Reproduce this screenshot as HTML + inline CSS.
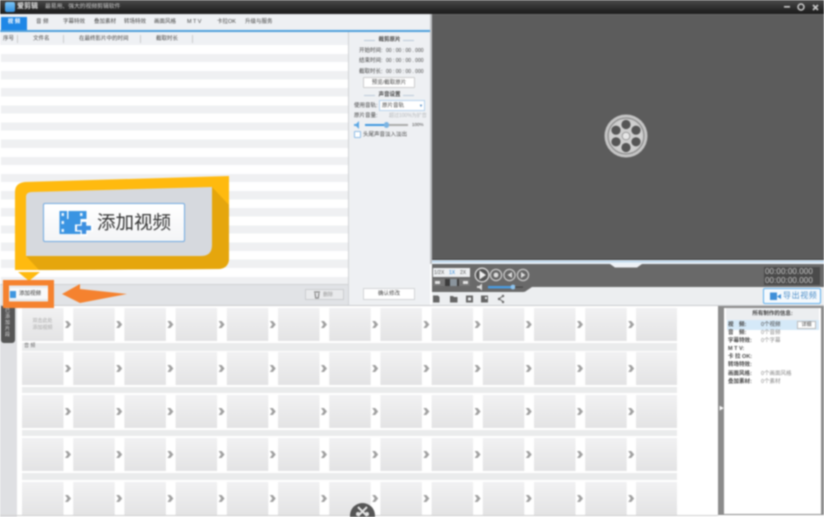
<!DOCTYPE html>
<html lang="zh">
<head>
<meta charset="utf-8">
<title>爱剪辑</title>
<style>
html,body{margin:0;padding:0;background:#fff;}
#app{position:relative;width:824px;height:517px;overflow:hidden;background:#fff;font-family:"Liberation Sans","Noto Sans CJK SC",sans-serif;filter:blur(0.7px);}
#app div,#app span.t{position:absolute;}
.t{position:absolute;white-space:nowrap;font-size:5.5px;line-height:8px;color:#444;}
.c{text-align:center;}
svg{position:absolute;left:0;top:0;}
</style>
</head>
<body>
<div id="app">
  <!-- title bar -->
  <div style="left:0;top:0;width:824px;height:14px;background:linear-gradient(#4a4a4a,#222 80%,#1c1c1c)"></div>
  <div style="left:5px;top:2px;width:10px;height:10px;border-radius:2px;background:linear-gradient(#7cc4f4,#2f8fe0)"></div>
  <span class="t" style="left:17px;top:3px;font-size:7px;font-weight:bold;color:#ddd">爱剪辑</span>
  <span class="t" style="left:45px;top:3px;font-size:5.8px;color:#ccc">最易用、强大的视频剪辑软件</span>

  <!-- left area -->
  <div style="left:0;top:14px;width:431px;height:16px;background:#eef0f3"></div>
  <div style="left:1px;top:17px;width:26px;height:13px;background:#1f87e6"></div>
  <span class="t c" style="left:1px;top:18px;width:26px;color:#fff;font-weight:bold">视 频</span>
  <span class="t" style="left:36px;top:18px">音 频</span>
  <span class="t" style="left:63px;top:18px">字幕特效</span>
  <span class="t" style="left:94px;top:18px">叠加素材</span>
  <span class="t" style="left:124px;top:18px">转场特效</span>
  <span class="t" style="left:154px;top:18px">画面风格</span>
  <span class="t" style="left:187px;top:18px">M T V</span>
  <span class="t" style="left:217px;top:18px">卡拉OK</span>
  <span class="t" style="left:245px;top:18px">升级与服务</span>
  <div style="left:0;top:30px;width:431px;height:2px;background:#4e9fdc"></div>

  <!-- list -->
  <div style="left:0;top:32px;width:348px;height:13px;background:#eff1f4"></div>
  <span class="t" style="left:3px;top:35px">序号</span>
  <span class="t" style="left:33px;top:35px">文件名</span>
  <span class="t" style="left:79px;top:35px">在最终影片中的时间</span>
  <span class="t" style="left:156px;top:35px">截取时长</span>
  <div style="left:17px;top:35px;width:1px;height:8px;background:#ccc"></div>
  <div style="left:63px;top:35px;width:1px;height:8px;background:#ccc"></div>
  <div style="left:140px;top:35px;width:1px;height:8px;background:#ccc"></div>
  <div style="left:192px;top:35px;width:1px;height:8px;background:#ccc"></div>
  <div style="left:1px;top:45px;width:347px;height:239px;background:repeating-linear-gradient(#fff 0 8.9px,#eff0f2 8.9px 17.15px)"></div>

  <!-- side panel -->
  <div style="left:348px;top:32px;width:82px;height:273px;background:#eef0f3;border-left:1px solid #d0d2d5;box-sizing:border-box"></div>
  <div style="left:430px;top:14px;width:2px;height:250px;background:#bfc1c4"></div>
  <span class="t c" style="left:349px;top:36px;width:81px;font-weight:bold">裁剪原片</span>
  <div style="left:364px;top:40px;width:11px;height:1px;background:#b9c9d8"></div>
  <div style="left:403px;top:40px;width:11px;height:1px;background:#b9c9d8"></div>
  <span class="t" style="left:359px;top:47px">开始时间:</span><span class="t" style="left:386px;top:47px;font-size:5px">00 : 00 : 00 . 000</span>
  <span class="t" style="left:359px;top:57px">结束时间:</span><span class="t" style="left:386px;top:57px;font-size:5px">00 : 00 : 00 . 000</span>
  <span class="t" style="left:359px;top:68px">截取时长:</span><span class="t" style="left:386px;top:68px;font-size:5px">00 : 00 : 00 . 000</span>
  <div style="left:363px;top:77px;width:52px;height:11px;background:#fff;border:1px solid #ccc;box-sizing:border-box;border-radius:1px"></div>
  <span class="t c" style="left:363px;top:79px;width:52px">预览/截取原片</span>
  <span class="t c" style="left:349px;top:91px;width:81px;font-weight:bold">声音设置</span>
  <div style="left:364px;top:95px;width:11px;height:1px;background:#b9c9d8"></div>
  <div style="left:403px;top:95px;width:11px;height:1px;background:#b9c9d8"></div>
  <span class="t" style="left:354px;top:102px">使用音轨:</span>
  <div style="left:379px;top:100px;width:46px;height:11px;background:#fff;border:1px solid #b6d3ee;box-sizing:border-box"></div>
  <span class="t" style="left:382px;top:102px">原片音轨</span>
  <span class="t" style="left:419px;top:102px;font-size:4px;color:#3d7fc0">▼</span>
  <span class="t" style="left:354px;top:112px">原片音量:</span>
  <span class="t" style="left:389px;top:112px;font-size:5px;color:#b5b8bb">超过100%为扩音</span>
  <svg width="12" height="8" style="left:353px;top:121px"><path d="M1 3h2l3-3v8l-3-3H1z" fill="#5ba7e4"/></svg>
  <div style="left:365px;top:124px;width:21px;height:2px;background:#3f97de"></div>
  <div style="left:386px;top:124px;width:22px;height:2px;background:#aaa"></div>
  <div style="left:384px;top:122px;width:5px;height:6px;border-radius:3px;background:#7cb4e2"></div>
  <span class="t" style="left:412px;top:121px;font-size:4.5px">100%</span>
  <div style="left:354px;top:131px;width:7px;height:7px;background:#fff;border:1px solid #8dbce6;box-sizing:border-box;border-radius:1px"></div>
  <span class="t" style="left:363px;top:131px">头尾声音淡入淡出</span>

  <!-- list footer -->
  <div style="left:0;top:284px;width:348px;height:21px;background:#e1e3e6;border-top:1px solid #cfd1d4;box-sizing:border-box"></div>
  <div style="left:305px;top:289px;width:39px;height:11px;background:#e9eaec;border:1px solid #cbcdd0;box-sizing:border-box"></div>
  <span class="t" style="left:323px;top:291px;font-size:5px;color:#999">删除</span>
  <svg width="8" height="9" style="left:313px;top:290px"><path d="M1 2h6M2 3l.7 5h2.6L6 3" fill="none" stroke="#888" stroke-width="1.2"/></svg>
  <div style="left:363px;top:288px;width:52px;height:12px;background:#fff;border:1px solid #d2d4d7;box-sizing:border-box"></div>
  <span class="t c" style="left:363px;top:290px;width:52px">确认修改</span>
  <div style="left:0;top:305px;width:824px;height:1px;background:#c9cbce"></div>

  <!-- preview -->
  <div style="left:432px;top:14px;width:392px;height:245px;background:#5c5c5c"></div>
  <div style="left:432px;top:14px;width:392px;height:1px;background:#6a6a6a"></div>
  <svg width="824" height="517">
    <!-- window buttons -->
    <rect x="784" y="6" width="6" height="1.6" fill="#ccc"/>
    <circle cx="801" cy="7" r="3" fill="none" stroke="#ccc" stroke-width="1.5"/>
    <path d="M813 5l5 5M818 5l-5 5" stroke="#ccc" stroke-width="1.6"/>
    <!-- reel -->
    <circle cx="626" cy="136" r="21.5" fill="#c4c4c4"/>
    <circle cx="626" cy="136" r="18" fill="none" stroke="#858585" stroke-width="1"/>
    <circle cx="626" cy="136" r="16.5" fill="#cfcfcf"/>
    <g fill="#555">
      <circle cx="626" cy="124.5" r="4.6"/><circle cx="626" cy="147.5" r="4.6"/>
      <circle cx="616" cy="130.2" r="4.6"/><circle cx="636" cy="130.2" r="4.6"/>
      <circle cx="616" cy="141.8" r="4.6"/><circle cx="636" cy="141.8" r="4.6"/>
    </g>
    <circle cx="626" cy="136" r="3.8" fill="#e6e6e6" stroke="#9a9a9a" stroke-width="1"/>
  </svg>

  <!-- player progress -->
  <div style="left:432px;top:259px;width:392px;height:5px;background:#e8f0f8;border-top:1px solid #3d3d3d;box-sizing:border-box"></div>
  <div style="left:432px;top:261px;width:392px;height:1px;background:#a8cbe8"></div>
  <div style="left:432px;top:264px;width:392px;height:23px;background:#696969"></div>
  <div style="left:432px;top:287px;width:392px;height:18px;background:#eceef0"></div>
  <div style="left:763px;top:288px;width:58px;height:16px;background:#f4f9fd;border:1.5px solid #5fb0ee;box-sizing:border-box;border-radius:2px"></div>
  <svg width="824" height="517">
    <path d="M432 287H532L526 291Q525 292 522 292H432Z" fill="#696969"/>
    <path d="M610 264H642L637 267.5H615Z" fill="#eef1f5"/>
    <!-- circle buttons -->
    <circle cx="482" cy="275" r="6.8" fill="#555" stroke="#ddd" stroke-width="1.3"/>
    <path d="M479.5 270.5l6.5 4.5-6.5 4.5z" fill="#eee"/>
    <circle cx="496" cy="275" r="5.6" fill="#666" stroke="#ccc" stroke-width="1.2"/>
    <circle cx="496" cy="275" r="2.4" fill="#ddd"/>
    <circle cx="509.5" cy="275" r="5.6" fill="#666" stroke="#ccc" stroke-width="1.2"/>
    <path d="M512 272v6l-4.5-3z" fill="#ddd"/>
    <circle cx="523" cy="275" r="5.6" fill="#666" stroke="#ccc" stroke-width="1.2"/>
    <path d="M521 272v6l4.5-3z" fill="#ddd"/>
    <!-- volume -->
    <path d="M477 286h2l3-2.5v7l-3-2.5h-2z" fill="#ddd"/>
    <rect x="488" y="286" width="26" height="2.4" fill="#4a9be0"/>
    <circle cx="513" cy="287" r="2.4" fill="#8fc4ee"/>
    <rect x="515" y="286.5" width="8" height="1.2" fill="#444"/>
    <!-- toolbar icons -->
    <g fill="#666">
      <path d="M433 295.500h5l1.500 1.500v5.500h-6.500z"/>
      <path d="M450 296h3l1 1h3.500v5.500h-7.500z"/>
      <path d="M466 295.500h7v7h-7zM468 297.500v3h3v-3z" fill-rule="evenodd"/>
      <path d="M481 295.500h7v7h-7zM485 297v2h2v-2z" fill-rule="evenodd"/>
    </g>
    <path d="M503 296l-4 2.800 4 2.800" fill="none" stroke="#666" stroke-width="1"/>
    <circle cx="503" cy="296" r="1.2" fill="#666"/><circle cx="503" cy="302" r="1.2" fill="#666"/><circle cx="499" cy="299" r="1.2" fill="#666"/>
    <!-- export icon -->
    <path d="M770 292.500h7v7.500h-7z" fill="#3f8fd8"/><path d="M777 296.500l4-2.500v5z" fill="#3f8fd8"/>
  </svg>
  <div style="left:433px;top:268px;width:37px;height:9px;background:#eef0f2"></div>
  <span class="t" style="left:434px;top:269px;font-size:5px;color:#555">1/2X</span>
  <span class="t" style="left:449px;top:269px;font-size:5px;color:#1f7fd8">1X</span>
  <span class="t" style="left:460px;top:269px;font-size:5px;color:#555">2X</span>
  <div style="left:433px;top:279px;width:37px;height:7px;background:#777"></div>
  <div style="left:445px;top:279px;width:14px;height:7px;background:#3c3c3c"></div>
  <div style="left:450px;top:279px;width:7px;height:7px;background:#8a949c"></div>
  <div style="left:435px;top:281px;width:5px;height:3px;background:#e2e2e2"></div>
  <div style="left:463px;top:281px;width:5px;height:3px;background:#e2e2e2"></div>
  <div style="left:764px;top:267px;width:56px;height:18px;background:#4a4a4a"></div>
  <span class="t" style="left:765px;top:267px;font-size:8px;line-height:9px;color:#c8c8c8;letter-spacing:.1px">00:00:00.000</span>
  <span class="t" style="left:765px;top:276px;font-size:8px;line-height:9px;color:#c8c8c8;letter-spacing:.1px">00:00:00.000</span>
  <span class="t" style="left:783px;top:292px;font-size:8px;color:#4f8fc8;letter-spacing:.6px">导出视频</span>

  <!-- timeline -->
  <div style="left:0;top:306px;width:17px;height:211px;background:#dfe0e3"></div>
  <div style="left:1px;top:306px;width:14px;height:37px;background:#555;border-radius:0 0 3px 3px"></div>
  <span class="t" style="left:5px;top:308px;width:6px;font-size:5px;line-height:6px;color:#ddd;white-space:normal">已添加片段</span>
  <div style="left:22px;top:343px;width:655px;height:8px;background:#eaebec"></div>
  <div style="left:22px;top:387px;width:655px;height:6px;background:#eaebec"></div>
  <div style="left:22px;top:430px;width:655px;height:6px;background:#eaebec"></div>
  <div style="left:22px;top:473px;width:655px;height:7px;background:#eaebec"></div>
  <span class="t" style="left:24px;top:343px;font-size:5px;line-height:7px;color:#666">音 频</span>
  <svg width="824" height="517">
    <defs>
      <linearGradient id="g" x1="0" y1="0" x2="0" y2="1"><stop offset="0" stop-color="#f1f1f2"/><stop offset="1" stop-color="#e3e3e4"/></linearGradient>
      <g id="cell">
        <rect width="41.5" height="33" fill="url(#g)"/>
        <path d="M43 13h3l3 3.500-3 3.500h-3l2.500-3.500z" fill="#a0a0a0"/>
      </g>
      <g id="row">
        <use href="#cell" x="0"/><use href="#cell" x="51.2"/><use href="#cell" x="102.4"/><use href="#cell" x="153.6"/>
        <use href="#cell" x="204.8"/><use href="#cell" x="256"/><use href="#cell" x="307.2"/><use href="#cell" x="358.4"/>
        <use href="#cell" x="409.6"/><use href="#cell" x="460.8"/><use href="#cell" x="512"/><use href="#cell" x="563.2"/>
        <rect x="614" width="41" height="33" fill="url(#g)"/>
      </g>
    </defs>
    <use href="#row" x="22" y="308"/>
    <use href="#row" x="22" y="352"/>
    <use href="#row" x="22" y="395"/>
    <use href="#row" x="22" y="438"/>
    <use href="#row" x="22" y="482"/>
    <!-- scissors badge -->
    <circle cx="362.5" cy="515.500" r="12.5" fill="#555"/>
    <path d="M358 507l9 9M367 507l-9 9" stroke="#e4e4e4" stroke-width="2"/>
    <circle cx="358" cy="514" r="2" fill="#e4e4e4"/><circle cx="367" cy="514" r="2" fill="#e4e4e4"/>
  </svg>
  <span class="t c" style="left:22px;top:318px;width:41px;font-size:5px;line-height:7px;color:#aaa;white-space:normal">双击此处<br>添加视频</span>
  <div style="left:0;top:515px;width:350px;height:1px;background:#cfcfcf"></div>
  <div style="left:375px;top:515px;width:343px;height:1px;background:#cfcfcf"></div>

  <!-- right info panel -->
  <div style="left:718px;top:306px;width:106px;height:209px;background:#8b8b8b"></div>
  <span class="t" style="left:719px;top:405px;font-size:5px;color:#fff">▶</span>
  <div style="left:724px;top:308px;width:97px;height:206px;background:#fff"></div>
  <div style="left:726px;top:308px;width:93px;height:12px;background:#eceef0"></div>
  <div style="left:727px;top:320px;width:92px;height:10px;background:#d5e9f8"></div>
  <div style="left:797px;top:321px;width:19px;height:8px;background:#fff;border:1px solid #bbb;box-sizing:border-box"></div>
  <span class="t c" style="left:797px;top:321px;width:19px;font-size:5px">详细</span>
  <span class="t c" style="left:726px;top:310px;width:93px;font-weight:bold">所有制作的信息:</span>
  <span class="t" style="left:728px;top:321px;font-weight:bold">视　频:</span><span class="t" style="left:761px;top:321px">0个视频</span>
  <span class="t" style="left:728px;top:329px;font-weight:bold">音　频:</span><span class="t" style="left:761px;top:329px;color:#888">0个音频</span>
  <span class="t" style="left:728px;top:337px;font-weight:bold">字幕特效:</span><span class="t" style="left:761px;top:337px;color:#888">0个字幕</span>
  <span class="t" style="left:728px;top:345px;font-weight:bold">M T V:</span>
  <span class="t" style="left:728px;top:353px;font-weight:bold">卡 拉 OK:</span>
  <span class="t" style="left:728px;top:361px;font-weight:bold">转场特效:</span>
  <span class="t" style="left:728px;top:370px;font-weight:bold">画面风格:</span><span class="t" style="left:761px;top:370px;color:#888">0个画面风格</span>
  <span class="t" style="left:728px;top:378px;font-weight:bold">叠加素材:</span><span class="t" style="left:761px;top:378px;color:#888">0个素材</span>

  <!-- callout -->
  <svg width="824" height="517">
    <path d="M15 192Q15 183 25 182L229 176V258Q229 268 219 269L30 270H15Z" fill="#ffba0f"/>
    <path d="M212 187L229 205V258Q229 268 219 269L39 270 26 256Z" fill="#e5a60d"/>
    <path d="M26 197Q26 192 32 192L212 187V245Q212 256 201 256L26 256Z" fill="#d6d9de"/>
    <path d="M18 272H40L29 281Z" fill="#ffba0f"/>
    <!-- orange box + arrow -->
    <path d="M3 280H54V308H3ZM9 285.500V301.500H48V285.500Z" fill="#f5822f" fill-rule="evenodd"/>
    <rect x="9" y="285.500" width="39" height="16" fill="#e6e9ec"/>
    <path d="M62 294L80 284V289L127 294 80 303Z" fill="#f5822f"/>
  </svg>
  <div style="left:43px;top:203px;width:142px;height:39px;background:linear-gradient(#fff,#f3f4f6);border:1px solid #6fa9e0;box-sizing:border-box;border-radius:2px"></div>
  <svg width="824" height="517">
    <rect x="59.500" y="211" width="27" height="23" fill="#3a94e2"/>
    <g fill="#e8f3fc">
      <rect x="61.500" y="213" width="2.500" height="3"/><rect x="61.500" y="221" width="2.500" height="3"/><rect x="61.500" y="229" width="2.500" height="3"/>
      <rect x="67" y="211" width="1.500" height="8"/><rect x="80" y="213" width="2.500" height="3"/>
    </g>
    <path d="M75 228H93" stroke="#fff" stroke-width="7"/>
    <path d="M84 219V236" stroke="#fff" stroke-width="7"/>
    <path d="M77 228H91M84 222V234" stroke="#3d8fe0" stroke-width="4.500"/>
  </svg>
  <span class="t" style="left:97px;top:212px;font-size:18.5px;line-height:22px;color:#333">添加视频</span>
  <div style="left:10px;top:288px;width:38px;height:11px;background:#f8f9fa"></div>
  <svg width="824" height="517"><rect x="10" y="291" width="6" height="7" fill="#3f97e0"/></svg>
  <span class="t" style="left:19px;top:290px;font-size:5.5px;color:#333">添加视频</span>
</div>
</body>
</html>
